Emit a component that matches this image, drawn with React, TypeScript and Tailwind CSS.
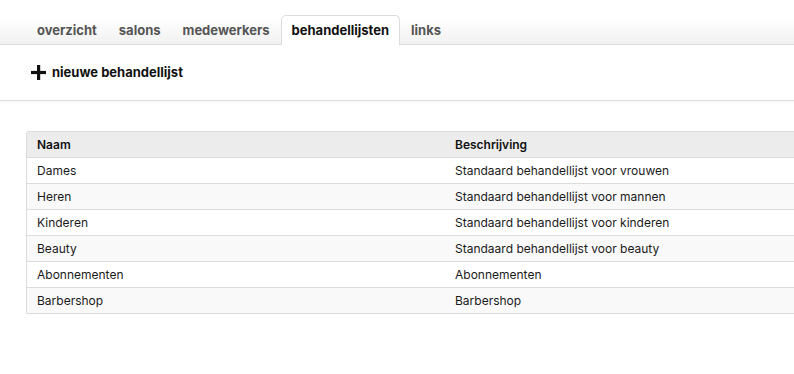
import React from "react";

const tabs = ["overzicht", "salons", "medewerkers", "behandellijsten", "links"];
const rows: [string, string][] = [
  ["Dames", "Standaard behandellijst voor vrouwen"],
  ["Heren", "Standaard behandellijst voor mannen"],
  ["Kinderen", "Standaard behandellijst voor kinderen"],
  ["Beauty", "Standaard behandellijst voor beauty"],
  ["Abonnementen", "Abonnementen"],
  ["Barbershop", "Barbershop"],
];

export default function App() {
  return (
    <div
      className="w-[794px] h-[374px] bg-white overflow-hidden text-[#222]"
      style={{ fontFamily: "Inter, 'Liberation Sans', sans-serif" }}
    >
      <div className="h-[45px] flex items-end pl-[26px] border-b border-[#dcdcdc] bg-gradient-to-b from-white from-40% to-[#f1f1f1]">
        {tabs.map((t) => {
          const active = t === "behandellijsten";
          return (
            <div
              key={t}
              className={
                "px-[10px] flex items-center text-[13px] font-bold border border-b-0 rounded-t-[5px] -mb-px " +
                (active
                  ? "bg-white border-[#dcdcdc] text-[#111] h-[30px]"
                  : "border-transparent text-[#555] h-[30px]")
              }
            >
              {t}
            </div>
          );
        })}
      </div>
      <div className="h-[56px] flex items-center pl-[31px] border-b border-[#dedede]">
        <svg width="15" height="15" viewBox="0 0 15 15" className="mr-[6px]">
          <rect x="6" y="0" width="3.2" height="15" fill="#111" />
          <rect x="0" y="5.9" width="15" height="3.2" fill="#111" />
        </svg>
        <span className="text-[13px] font-bold text-[#111]">nieuwe behandellijst</span>
      </div>
      <div className="h-[4px] bg-gradient-to-b from-[#f6f6f6] to-white" />
      <div className="pt-[26px] pl-[26px]">
        <div className="w-[800px] border-t border-l border-[#dcdcdc] rounded-tl-[3px] text-[12px]">
          <div className="flex h-[26px] items-center bg-[#ececec] border-b border-[#dcdcdc] font-semibold text-[#111]">
            <div className="w-[417px] pl-[10px]">Naam</div>
            <div className="pl-[11px]">Beschrijving</div>
          </div>
          {rows.map(([a, b], i) => (
            <div
              key={a}
              className={
                "flex h-[26px] items-center border-b border-[#dcdcdc] text-[#1a1a1a] " +
                (i % 2 === 1 ? "bg-[#f9f9f9]" : "bg-white")
              }
            >
              <div className="w-[417px] pl-[10px]">{a}</div>
              <div className="pl-[11px]">{b}</div>
            </div>
          ))}
        </div>
      </div>
    </div>
  );
}
